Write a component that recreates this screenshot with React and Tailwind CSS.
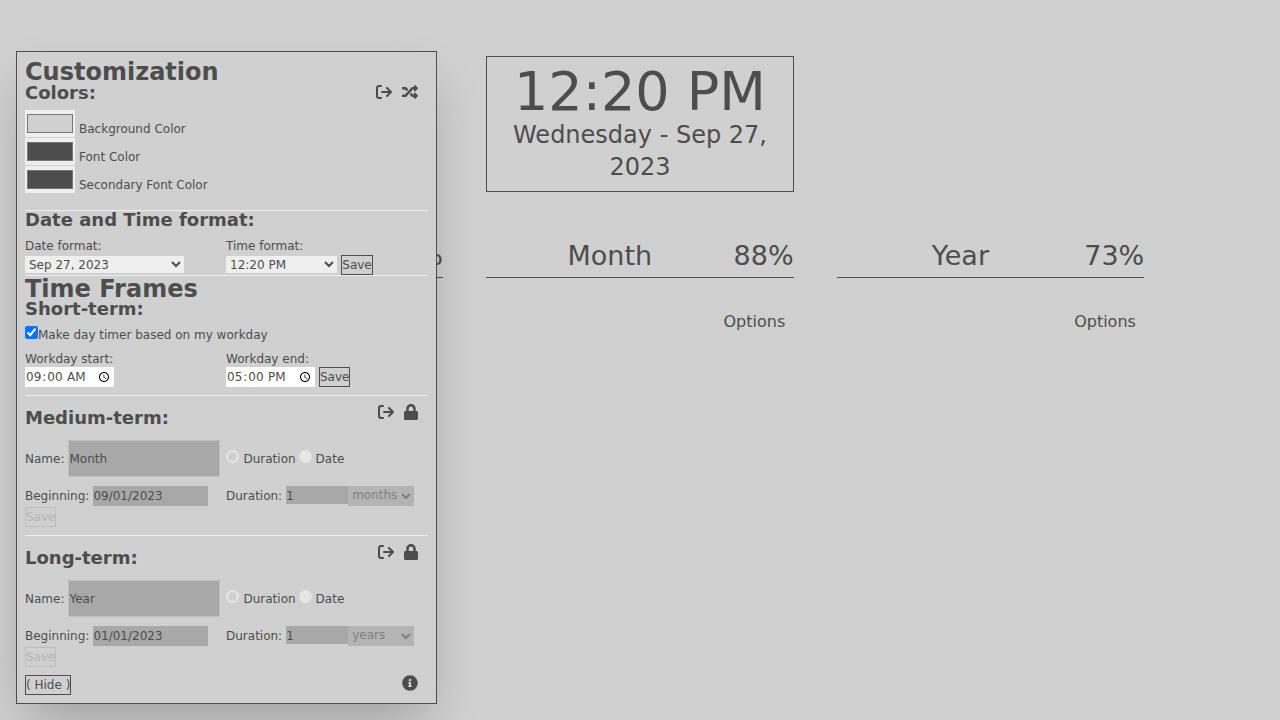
import { FaLock, FaInfoCircle, FaRandom } from 'react-icons/fa';

function ExitIcon() {
  return (
    <svg width="16" height="14" viewBox="0 0 16 14" fill="none" stroke="currentColor" strokeWidth="2" strokeLinecap="round" strokeLinejoin="round">
      <path d="M5 1H3a2 2 0 0 0-2 2v8a2 2 0 0 0 2 2h2" />
      <path d="M6 7h9M11 3l4 4-4 4" />
    </svg>
  );
}

function Timer({ name, pct }) {
  return (
    <div className="w-[307.67px]">
      <div className="flex justify-between items-end border-b border-[#4d4d4d] h-[40px] text-[27px] leading-[32px] pb-[5px]">
        <span className="flex-1 text-center">{name}</span>
        <span>{pct}</span>
      </div>
      <div className="mt-[34px] text-right pr-[8.4px] text-[16px] leading-[19px]">Options</div>
    </div>
  );
}

function TermSection({ title, name, date, unit }) {
  return (
    <section>
      <div className="flex justify-between items-start h-[44px] pr-[9px]">
        <h2 className="mt-[11px] text-[18px] leading-[22px] font-bold">{title}</h2>
        <div className="flex items-center gap-[9px] mt-[8px]">
          <ExitIcon />
          <FaLock size={16} />
        </div>
      </div>
      <div className="flex items-center h-[37px] text-[12px]">
        <label>Name:</label>
        <input disabled value={name} readOnly className="ml-[4px] w-[152px] h-[37px] bg-[#a8a8a8] border border-[#c0c0c0] px-0 pt-[1px] text-[12px] text-[#4d4d4d]" />
        <input disabled type="radio" defaultChecked={false} className="ml-[6px] mb-[5px] w-[13px] h-[13px] rounded-full border-2 border-[#e6e6e6] appearance-none" />
        <span className="ml-[4px]">Duration</span>
        <input disabled type="radio" className="ml-[3px] mb-[5px] w-[13px] h-[13px] rounded-full bg-[#e6e6e6] appearance-none" />
        <span className="ml-[4px]">Date</span>
      </div>
      <div className="flex mt-[8px] text-[12px] h-[21px]">
        <div className="w-[201px] flex items-center">
          <span className="mt-[1px]">Beginning:</span>
          <input disabled value={date} readOnly className="ml-[4px] w-[115px] h-[20px] bg-[#a8a8a8] px-0 pt-[1px] text-[12px] text-[#4d4d4d]" />
        </div>
        <div className="flex items-start">
          <span className="mt-[2px]">Duration:</span>
          <input disabled value="1" readOnly className="ml-[4px] mt-[1px] w-[62px] h-[18px] bg-[#a8a8a8] px-0 pt-[1px] text-[12px] text-[#4d4d4d]" />
          <select disabled className="mt-[1px] w-[66px] h-[20px] bg-[#b4b4b4] text-[12px] text-[#808080] pb-[3px]">
            <option>{unit}</option>
          </select>
        </div>
      </div>
      <button disabled className="block mt-[1px] w-[31px] h-[20px] border border-[#bdbdbd] text-[12px] text-[#b4b4b4]">Save</button>
    </section>
  );
}

export default function App() {
  return (
    <div className="relative min-h-screen bg-[#d0d0d0] text-[#4d4d4d] font-['DejaVu_Sans',sans-serif]">
      <main className="flex flex-col items-center pt-[56px]">
        <div className="w-[308px] h-[136px] border border-[#4d4d4d] text-center">
          <div className="text-[54px] leading-[63px] mt-[3px]">12:20 PM</div>
          <div className="text-[24px] leading-[32px] mt-[-4px]">Wednesday - Sep 27, 2023</div>
        </div>
        <div className="flex gap-[43px] mt-[46px] self-start ml-[135.3px]">
          <Timer name="Day" pct="99%" />
          <Timer name="Month" pct="88%" />
          <Timer name="Year" pct="73%" />
        </div>
      </main>

      <aside className="absolute left-[16px] top-[51px] w-[421px] h-[653px] border border-[#4d4d4d] bg-[#d0d0d0] px-[8px] shadow-2xl">
        <h1 className="mt-[9px] text-[24px] leading-[23px] font-bold">Customization</h1>
        <div className="flex justify-between items-center pr-[10px] -mt-[1px]">
          <h2 className="text-[18px] leading-[20px] font-bold">Colors:</h2>
          <div className="flex items-center gap-[10px] -mt-[2px]">
            <ExitIcon />
            <FaRandom size={16} />
          </div>
        </div>
        <div className="mt-[7px] text-[12px]">
          {[['#d0d0d0', 'Background Color'], ['#4d4d4d', 'Font Color'], ['#4d4d4d', 'Secondary Font Color']].map(([color, label]) => (
            <div key={label} className="flex items-end h-[28px]">
              <input type="color" defaultValue={color} className="w-[50px] h-[27px] bg-[#efefef] self-start" />
              <span className="ml-[4px] leading-[15px] mb-[1px]">{label}</span>
            </div>
          ))}
        </div>
        <hr className="mt-[16px] border-[#eeeeee]" />
        <h2 className="mt-[-1px] text-[18px] leading-[20px] font-bold">Date and Time format:</h2>
        <div className="flex mt-[9px] text-[12px]">
          <div className="w-[201px]">
            <label className="block leading-[15px]">Date format:</label>
            <select className="block mt-[2px] w-[159px] h-[17px] bg-[#efefef] text-[12px]">
              <option>Sep 27, 2023</option>
            </select>
          </div>
          <div>
            <label className="block leading-[15px]">Time format:</label>
            <div className="flex items-start mt-[1px]">
              <select className="mt-[1px] w-[111px] h-[17px] bg-[#efefef] text-[12px]">
                <option>12:20 PM</option>
              </select>
              <button className="ml-[4px] w-[32px] h-[20px] border border-[#4d4d4d] text-[12px]">Save</button>
            </div>
          </div>
        </div>
        <hr className="mt-0 border-[#eeeeee]" />
        <h1 className="mt-[1px] text-[24px] leading-[24px] font-bold">Time Frames</h1>
        <h2 className="-mt-[2px] text-[18px] leading-[20px] font-bold">Short-term:</h2>
        <div className="flex items-start mt-[7px] text-[12px]">
          <input type="checkbox" defaultChecked className="appearance-auto w-[13px] h-[13px]" />
          <span className="leading-[15px] mt-[2px]">Make day timer based on my workday</span>
        </div>
        <div className="flex mt-[9px] text-[12px]">
          <div className="w-[201px]">
            <label className="block leading-[15px]">Workday start:</label>
            <input type="time" defaultValue="09:00" className="block w-[89px] h-[20px] bg-white px-0 text-[12px]" />
          </div>
          <div>
            <label className="block leading-[15px]">Workday end:</label>
            <div className="flex">
              <input type="time" defaultValue="17:00" className="w-[89px] h-[20px] bg-white px-0 text-[12px]" />
              <button className="ml-[4px] w-[31px] h-[20px] border border-[#4d4d4d] text-[12px]">Save</button>
            </div>
          </div>
        </div>
        <hr className="mt-[8px] border-[#eeeeee]" />
        <TermSection title="Medium-term:" name="Month" date="09/01/2023" unit="months" />
        <hr className="mt-[8px] border-[#eeeeee]" />
        <TermSection title="Long-term:" name="Year" date="01/01/2023" unit="years" />
        <div className="flex justify-between items-center mt-[8px] pr-[10px]">
          <button className="w-[46px] h-[20px] border border-[#4d4d4d] text-[12px] whitespace-nowrap">( Hide )</button>
          <FaInfoCircle size={16} className="mb-[4px]" />
        </div>
      </aside>
    </div>
  );
}
